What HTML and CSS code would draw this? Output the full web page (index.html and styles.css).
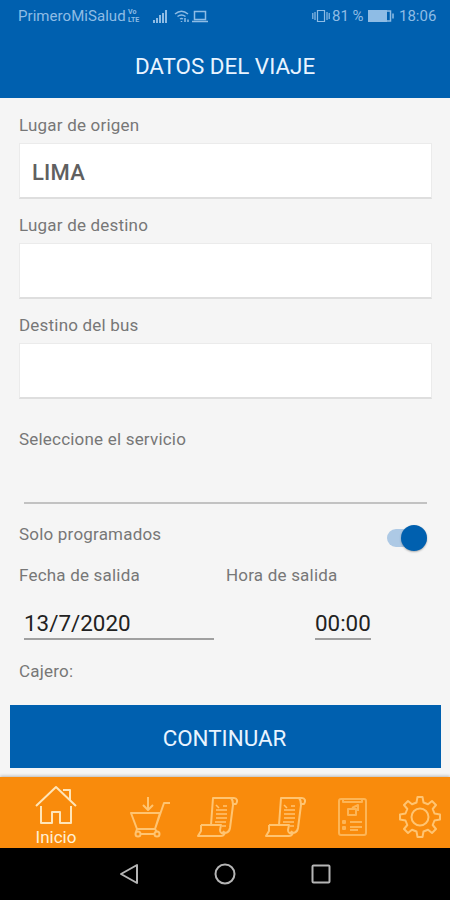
FILE: index.html
```html
<!DOCTYPE html>
<html lang="es">
<head>
    <meta charset="UTF-8">
    <meta name="viewport" content="width=device-width, initial-scale=1.0">
    <title>Datos del viaje</title>
    <link rel="stylesheet" href="styles.css">
</head>
<body>
    <!-- Phone status bar -->
    <div class="status-bar">
        <span class="carrier">PrimeroMiSalud</span>
        <span class="volte"><span>Vo</span><span>LTE</span></span>
        <svg class="signal" width="14" height="13" viewBox="0 0 14 13">
            <path d="M0 10h2v3H0zM3 8h2v5H3zM6 5h2v8H6zM9 3h2v10H9zM12 0h2v13h-2z"/>
        </svg>
        <svg class="wifi line" width="16" height="13" viewBox="0 0 16 13">
            <path d="M1 4C5 .5 10 .5 14 4M3.500 6.500c2.500-2 5.500-2 8 0M6 9c1-.8 2-.8 3 0M7.500 11v1M11 8v4M14 12V9.500"/>
        </svg>
        <svg class="laptop line" width="16" height="13" viewBox="0 0 16 13">
            <path d="M2.500 1.500h11v8h-11zM0 11.500h16"/>
        </svg>
        <svg class="vibrate line" width="18" height="14" viewBox="0 0 18 14">
            <path d="M5.500 1.500h7v11h-7zM3 3v8M15 3v8M.8 4v6M17.200 4v6"/>
        </svg>
        <span class="percent">81 %</span>
        <svg class="battery" width="26" height="12" viewBox="0 0 26 12">
            <path d="M0 0h19v12H0z"/>
            <path class="line" d="M19 1h3.500v10H19M25 3.500v5"/>
        </svg>
        <span class="clock">18:06</span>
    </div>

    <header class="title-bar">DATOS DEL VIAJE</header>

    <main class="form">
        <label class="label">Lugar de origen</label>
        <div class="field">LIMA</div>
        <label class="label">Lugar de destino</label>
        <div class="field"></div>
        <label class="label">Destino del bus</label>
        <div class="field"></div>

        <label class="label service-label">Seleccione el servicio</label>
        <div class="select-line"></div>

        <div class="switch-row">
            <span class="label">Solo programados</span>
            <span class="switch"><span class="knob"></span></span>
        </div>

        <div class="date-row">
            <div class="date-col">
                <span class="label">Fecha de salida</span>
                <span class="date-value">13/7/2020</span>
            </div>
            <div class="date-col">
                <span class="label">Hora de salida</span>
                <span class="time-value">00:00</span>
            </div>
        </div>

        <span class="label cashier">Cajero:</span>
    </main>

    <div class="action">
        <button class="btn-continue">CONTINUAR</button>
    </div>

    <!-- Tabs -->
    <nav class="tabs">
        <a class="tab active">
            <svg width="42" height="40" viewBox="0 0 42 40">
                <path d="M1 21 21 2l20 19M28 5h7v10M6 21v17h11V27h8v11h11V21"/>
            </svg>
            <span>Inicio</span>
        </a>
        <a class="tab">
            <svg width="42" height="42" viewBox="0 0 42 42">
                <path d="M19 1v12M14 9l5 5 5-5M2 17h29l-5 16H8zM41 7h-6l-9 26M8 33l-1 3M26 33l2 3M12 38h13"/>
                <circle cx="9" cy="38" r="2.500"/><circle cx="28" cy="38" r="2.500"/>
            </svg>
        </a>
        <a class="tab">
            <svg width="42" height="42" viewBox="0 0 42 42">
                <path d="M15 29 17 2h21c3 0 4 3 2 6h-3M35 2c2 2 2 4 2 7l-3 23c-1 5-5 6-7 3M5 29h20l-1 5c0 3 2 4 4 2M5 29v6l-3 5h23c2 0 3-1 4-3"/>
                <path class="text-lines" d="M20 9l3 3M27 10h4M20 14h11M20 18h11M20 22h11M19 26h11M26 30h4"/>
            </svg>
        </a>
        <a class="tab">
            <svg width="42" height="42" viewBox="0 0 42 42">
                <path d="M15 29 17 2h21c3 0 4 3 2 6h-3M35 2c2 2 2 4 2 7l-3 23c-1 5-5 6-7 3M5 29h20l-1 5c0 3 2 4 4 2M5 29v6l-3 5h23c2 0 3-1 4-3"/>
                <path class="text-lines" d="M20 9l3 3M27 10h4M20 14h11M20 18h11M20 22h11M19 26h11M26 30h4"/>
            </svg>
        </a>
        <a class="tab faded">
            <svg width="42" height="42" viewBox="0 0 42 42">
                <rect x="8" y="3" width="27" height="36" rx="2"/>
                <path d="M12 4v2h19V4M17 13h8v6h-8zM21 12l6-3v6M19 26h12M19 31h12M19 34h8M12 25h2v2h-2zM12 31h2v2h-2z"/>
            </svg>
        </a>
        <a class="tab">
            <svg width="42" height="42" viewBox="0 0 42 42">
                <path d="M18.500 1h5l1 5.500 4.500 1.800L33 5l4 4-3.300 4 1.800 4.500 5.500 1v5l-5.500 1-1.800 4.500L37 33l-4 4-4-3.300-4.500 1.800-1 5.500h-5l-1-5.500-4.500-1.800L9 37l-4-4 3.300-4-1.800-4.500-5.500-1v-5l5.500-1L8.300 13 5 9l4-4 4 3.300 4.500-1.800z"/>
                <circle cx="21" cy="21" r="8.500"/>
            </svg>
        </a>
    </nav>

    <!-- Android buttons -->
    <div class="nav-bar">
        <svg width="22" height="24" viewBox="0 0 22 24"><path d="M19 3v18L3 12z"/></svg>
        <svg width="24" height="24" viewBox="0 0 24 24"><circle cx="12" cy="12" r="9.500"/></svg>
        <svg width="22" height="24" viewBox="0 0 22 24"><rect x="2.500" y="3.500" width="17" height="17" rx="1"/></svg>
    </div>
</body>
</html>
```
FILE: styles.css
```css
* {
    box-sizing: border-box;
}

body {
    margin: 0;
    width: 450px;
    height: 900px;
    display: flex;
    flex-direction: column;
    overflow: hidden;
    background: #f5f5f5;
    font-family: Roboto, sans-serif;
}

svg {
    display: block;
    flex: none;
}

.status-bar {
    height: 32px;
    padding: 0 14px 0 18px;
    display: flex;
    align-items: center;
    background: #0060af;
    color: #8ebce5;
    font-size: 15px;
    white-space: nowrap;
}

.status-bar svg {
    fill: #8ebce5;
}

.status-bar .line {
    fill: none;
    stroke: #8ebce5;
    stroke-width: 1.5;
}

.status-bar .vibrate {
    stroke-width: 1.2;
}

.carrier {
    width: 110px;
    letter-spacing: 0.05px;
}

.volte {
    width: 25px;
    display: flex;
    flex-direction: column;
    font-size: 7px;
    font-weight: bold;
    line-height: 8px;
    height: 16px;
}

.wifi {
    margin-left: 7px;
}

.laptop {
    margin-left: 2px;
}

.vibrate {
    margin-left: auto;
}

.percent {
    width: 36px;
    margin-left: 2px;
}

.clock {
    width: 37px;
    margin-left: 5px;
}

.title-bar {
    height: 66px;
    padding-top: 1px;
    display: flex;
    align-items: center;
    justify-content: center;
    background: #0060af;
    color: #e9f4ff;
    font-size: 22.4px;
}

.form {
    height: 607px;
    padding: 16px 18px 0 19px;
    display: flex;
    flex-direction: column;
}

.label {
    height: 22px;
    color: #777;
    font-size: 17px;
    line-height: 22px;
    letter-spacing: 0.2px;
}

.field {
    height: 56px;
    margin: 7px 0 15px;
    padding-left: 12px;
    background: #fff;
    border: 1px solid #ebebeb;
    border-bottom: 2px solid #dedede;
    color: #606060;
    font-size: 22px;
    font-weight: 500;
    letter-spacing: 0.2px;
    line-height: 57px;
}

.service-label {
    margin-top: 14px;
}

.select-line {
    height: 54px;
    margin: 0 5px 0 5px;
    border-bottom: 2px solid #c2c2c2;
}

.switch-row {
    height: 41px;
    margin-top: 19px;
    display: flex;
    justify-content: space-between;
}

.switch {
    width: 40px;
    height: 18px;
    margin: 6px 5px 0 0;
    display: flex;
    align-items: center;
    justify-content: flex-end;
    border-radius: 9px;
    background: #adc9e5;
}

.knob {
    width: 26px;
    height: 26px;
    flex: none;
    border-radius: 50%;
    background: #0060af;
    box-shadow: 0 1px 2px rgba(0, 0, 0, 0.3);
}

.date-row {
    display: grid;
    grid-template-columns: 207px 1fr;
}

.date-col {
    display: flex;
    flex-direction: column;
}

.date-value, .time-value {
    height: 41px;
    margin-top: 13px;
    margin-bottom: 20px;
    border-bottom: 2px solid #a0a0a0;
    color: #222;
    font-size: 22.4px;
    line-height: 48px;
}

.date-value {
    width: 190px;
    margin-left: 5px;
}

.time-value {
    width: 56px;
    margin-left: 89px;
}

.action {
    height: 72px;
    padding: 0 9px 0 10px;
}

.btn-continue {
    width: 100%;
    height: 63px;
    padding: 2px 2px 0 0;
    border: none;
    background: #0060af;
    color: #e9f4ff;
    font-family: inherit;
    font-size: 22.4px;
}

.tabs {
    height: 71px;
    display: flex;
    background: #f98b0c;
    box-shadow: 0 -1px 3px rgba(0, 0, 0, 0.25);
}

.tab {
    width: 67.5px;
    padding-top: 19px;
    display: flex;
    flex-direction: column;
    align-items: center;
    flex: none;
    color: #fff0d5;
}

.tab svg {
    fill: none;
    stroke: #ffc471;
    stroke-width: 2;
    stroke-linejoin: round;
}

.tab .text-lines {
    stroke-width: 1.6;
}

.tab.faded svg {
    stroke: #fdb556;
}

.tab.active {
    width: 112px;
    margin-right: 4px;
    padding-top: 8px;
    font-size: 17px;
    line-height: 24px;
}

.tab.active svg {
    stroke: #ffe5b8;
}

.nav-bar {
    height: 52px;
    display: flex;
    justify-content: center;
    align-items: center;
    gap: 73px;
    background: #000;
}

.nav-bar svg {
    fill: none;
    stroke: #b5b5b5;
    stroke-width: 2;
    stroke-linejoin: round;
}
```
